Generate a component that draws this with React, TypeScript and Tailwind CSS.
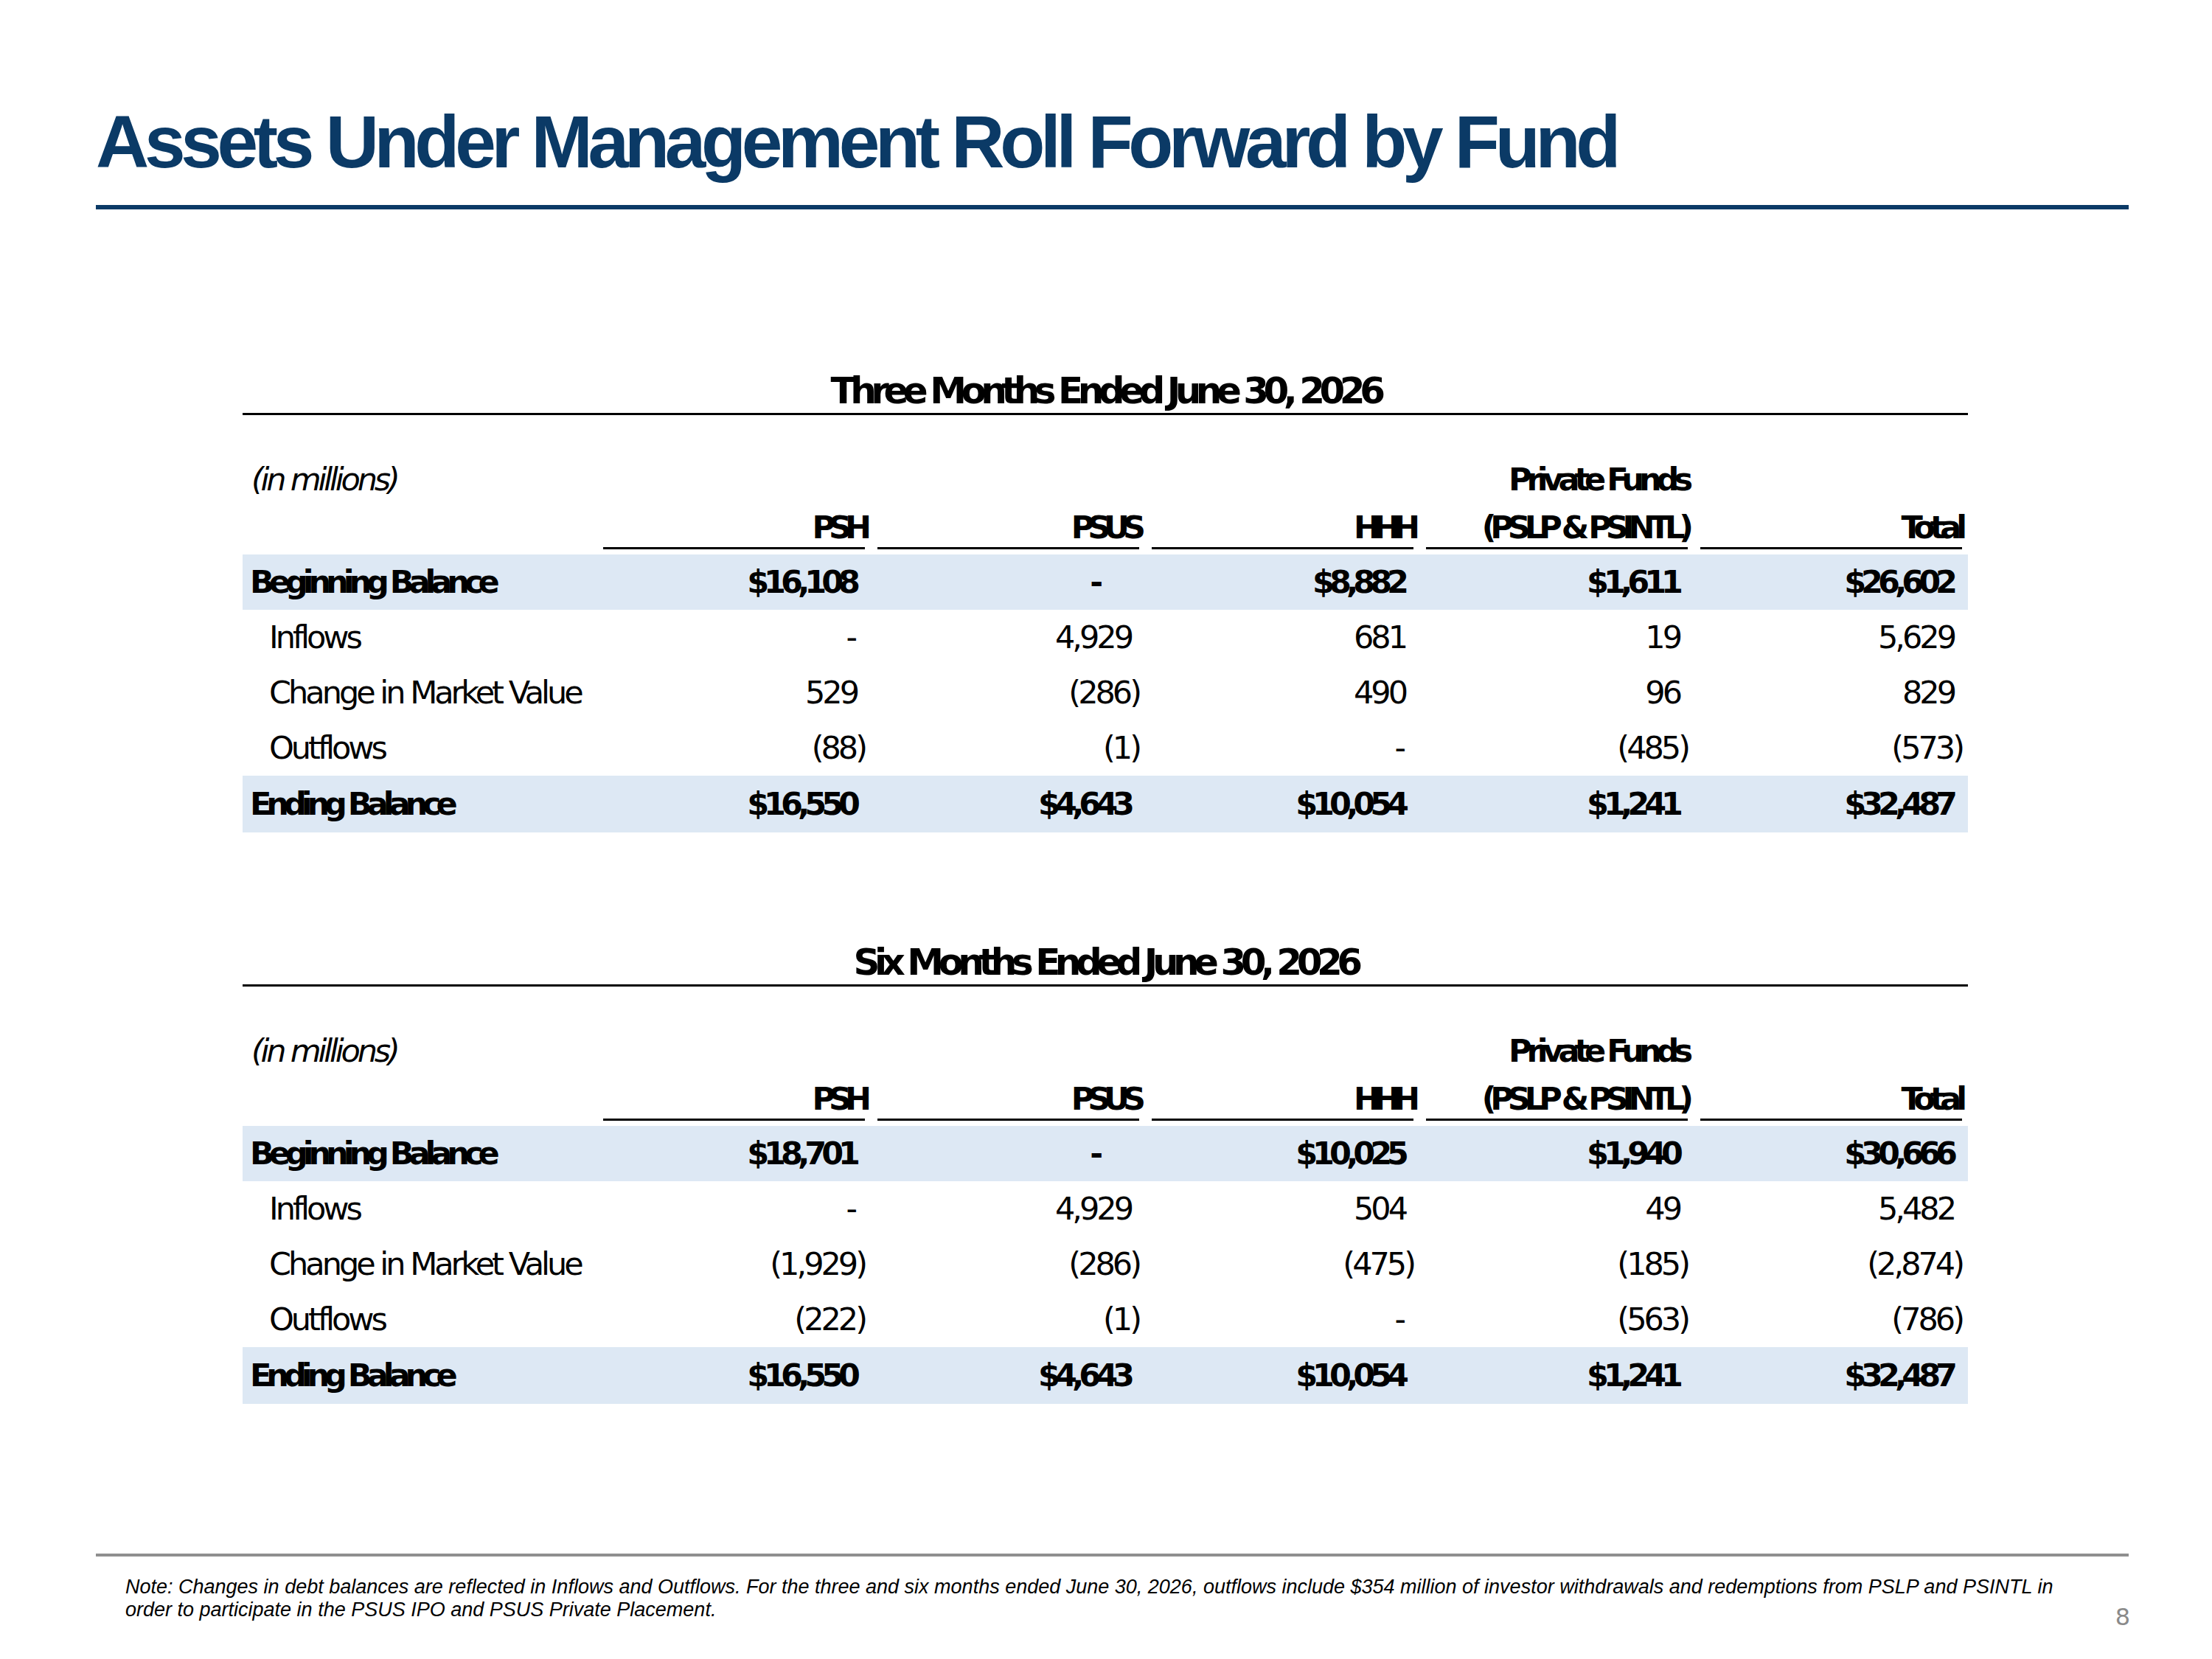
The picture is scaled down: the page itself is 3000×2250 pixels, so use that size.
import React from "react";

type Row = { label: string; bold: boolean; vals: string[] };

const table1: Row[] = [
  { label: "Beginning Balance", bold: true, vals: ["$16,108", "-", "$8,882", "$1,611", "$26,602"] },
  { label: "Inflows", bold: false, vals: ["-", "4,929", "681", "19", "5,629"] },
  { label: "Change in Market Value", bold: false, vals: ["529", "(286)", "490", "96", "829"] },
  { label: "Outflows", bold: false, vals: ["(88)", "(1)", "-", "(485)", "(573)"] },
  { label: "Ending Balance", bold: true, vals: ["$16,550", "$4,643", "$10,054", "$1,241", "$32,487"] },
];

const table2: Row[] = [
  { label: "Beginning Balance", bold: true, vals: ["$18,701", "-", "$10,025", "$1,940", "$30,666"] },
  { label: "Inflows", bold: false, vals: ["-", "4,929", "504", "49", "5,482"] },
  { label: "Change in Market Value", bold: false, vals: ["(1,929)", "(286)", "(475)", "(185)", "(2,874)"] },
  { label: "Outflows", bold: false, vals: ["(222)", "(1)", "-", "(563)", "(786)"] },
  { label: "Ending Balance", bold: true, vals: ["$16,550", "$4,643", "$10,054", "$1,241", "$32,487"] },
];

const headers = ["PSH", "PSUS", "HHH", "(PSLP & PSINTL)", "Total"];

function Num({ v, bold }: { v: string; bold: boolean }) {
  const isParen = v.startsWith("(");
  const isDash = v === "-";
  let cls = "";
  if (bold) {
    cls = isDash ? "pr-[56px] font-bold tracking-[-7px]" : "pr-[13px] font-bold tracking-[-7px]";
  } else {
    cls = isParen ? "pr-0 tracking-[-4px]" : isDash ? "pr-[14px] tracking-[-4px]" : "pr-[11px] tracking-[-4px]";
  }
  return (
    <div className="w-[372px] pl-[17px] flex justify-end items-center">
      <span className={cls}>{v}</span>
    </div>
  );
}

function DataRow({ row, last }: { row: Row; last: boolean }) {
  return (
    <div
      className={
        row.bold
          ? last
            ? "flex items-center h-[77px] bg-[#dde8f4]"
            : "flex items-center h-[75px] bg-[#dde8f4]"
          : "flex items-center h-[75px]"
      }
    >
      <div
        className={
          row.bold
            ? "w-[472px] pl-[10px] font-bold tracking-[-7px]"
            : "w-[472px] pl-[36px] tracking-[-4px]"
        }
      >
        {row.label}
      </div>
      {row.vals.map((v, i) => (
        <Num key={i} v={v} bold={row.bold} />
      ))}
    </div>
  );
}

function FundTable({ title, rows }: { title: string; rows: Row[] }) {
  return (
    <div className="ml-[329px] w-[2340px] font-['DejaVu_Sans',sans-serif] text-[43px] text-black">
      <div className="h-[60px] flex items-center justify-center text-[50px] font-bold tracking-[-7.5px]">
        {title}
      </div>
      <div className="h-[3px] bg-black" />
      <div className="mt-[62px] h-[50px] flex items-center">
        <div className="w-[472px] pl-[12px] italic tracking-[-4.2px]">(in millions)</div>
        <div className="w-[372px]" />
        <div className="w-[372px]" />
        <div className="w-[372px]" />
        <div className="w-[372px] pl-[17px] flex justify-end font-bold tracking-[-7px]">
          <span>Private Funds</span>
        </div>
        <div className="w-[372px]" />
      </div>
      <div className="mt-[15px] h-[50px] flex items-center">
        <div className="w-[472px]" />
        {headers.map((h) => (
          <div
            key={h}
            className={
              h === "Total"
                ? "w-[372px] pl-[17px] flex justify-end font-bold tracking-[-7px]"
                : h === "(PSLP & PSINTL)"
                ? "w-[372px] pl-[17px] flex justify-end font-bold tracking-[-8px] whitespace-pre"
                : "w-[372px] pl-[17px] flex justify-end font-bold tracking-[-9px]"
            }
          >
            <span>{h}</span>
          </div>
        ))}
      </div>
      <div className="mt-[2px] h-[3px] flex">
        <div className="w-[472px]" />
        {headers.map((h) => (
          <div key={h} className="w-[372px] pl-[17px]">
            <div className="h-[3px] bg-black" />
          </div>
        ))}
      </div>
      <div className="mt-[7px]">
        {rows.map((r, i) => (
          <DataRow key={i} row={r} last={i === rows.length - 1} />
        ))}
      </div>
    </div>
  );
}

export default function App() {
  return (
    <div className="w-[3000px] h-[2250px] bg-white flex flex-col overflow-hidden">
      <div className="pl-[130px] pr-[113px] pt-[142px]">
        <h1 className="text-[100px] leading-[100px] font-bold tracking-[-6.3px] text-[#0b3a66] font-['Liberation_Sans',Arial,sans-serif] whitespace-nowrap">
          Assets Under Management Roll Forward by Fund
        </h1>
        <div className="mt-[36px] h-[6px] bg-[#0b3a66]" />
      </div>

      <div className="mt-[216px]">
        <FundTable title="Three Months Ended June 30, 2026" rows={table1} />
      </div>
      <div className="mt-[146px]">
        <FundTable title="Six Months Ended June 30, 2026" rows={table2} />
      </div>

      <div className="mt-[203px] pl-[130px] pr-[113px]">
        <div className="h-[4px] bg-[#8f8f8f]" />
        <div className="flex justify-between items-start">
          <div className="mt-[26px] pl-[40px] text-[27px] leading-[31px] italic text-black font-['Liberation_Sans',Arial,sans-serif] whitespace-nowrap">
            Note: Changes in debt balances are reflected in Inflows and Outflows. For the three and six months ended June 30, 2026, outflows include $354 million of investor withdrawals and redemptions from PSLP and PSINTL in
            <br />
            order to participate in the PSUS IPO and PSUS Private Placement.
          </div>
          <div className="mt-[62px] text-[32px] leading-[40px] text-[#8a8a8a] font-['DejaVu_Sans',sans-serif] tracking-[-2px]">
            8
          </div>
        </div>
      </div>
    </div>
  );
}
